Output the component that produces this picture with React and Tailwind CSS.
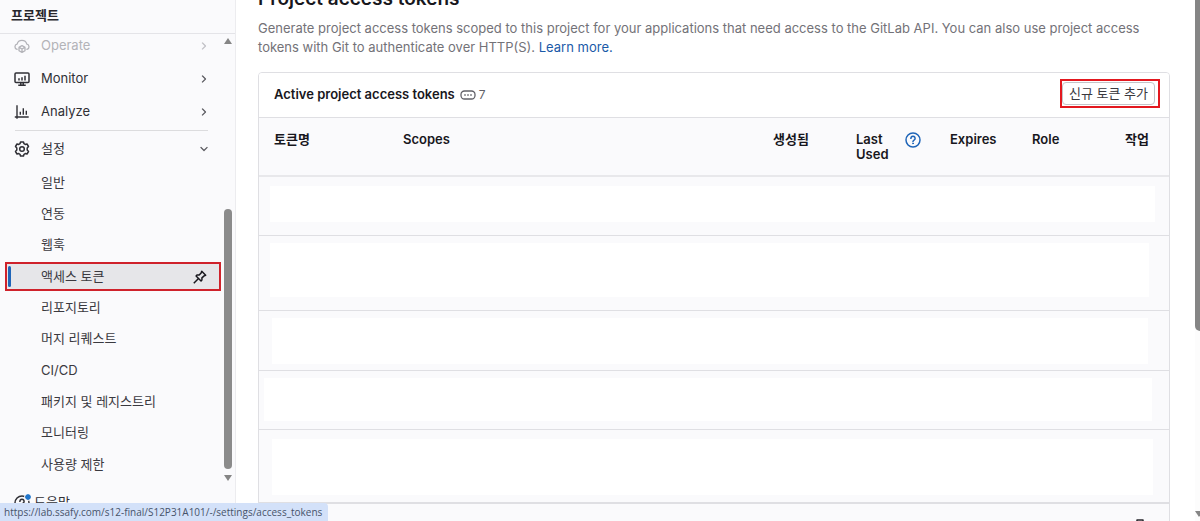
import React from 'react';

const line = { fill: 'none', stroke: 'currentColor', strokeWidth: 1.5, strokeLinecap: 'square', strokeLinejoin: 'round' };

const OperateIcon = () => (
  <svg viewBox="0 0 16 16" className="size-4 shrink-0" {...line} strokeWidth="1.3" aria-hidden="true">
    <path d="M3 11.3a2.6 2.6 0 0 1 .1-5.100A5 5 0 0 1 12.800 6.200a2.600 2.600 0 0 1 .2 5.100" />
    <path d="M8 7.600l3 1.600v3.500l-3 1.700-3-1.700V9.200z M5.200 9.400L8 11l2.800-1.600M8 11v3" />
  </svg>
);

const MonitorIcon = () => (
  <svg viewBox="0 0 16 16" className="size-4 shrink-0" {...line} aria-hidden="true">
    <rect x="1" y="2" width="14" height="9.500" rx="1" />
    <path d="M5 8v.7M8 7v1.700M11 5.500v3.200M5 14.300h6M6.800 12v2M9.200 12v2" />
  </svg>
);

const AnalyzeIcon = () => (
  <svg viewBox="0 0 16 16" className="size-4 shrink-0" {...line} strokeWidth="1.4" aria-hidden="true">
    <path d="M3 2v12M1.500 13h12.500M6.300 8.500v1.500M9.300 5v5M12.300 7.500v2.500" />
  </svg>
);

const SettingsIcon = () => (
  <svg viewBox="0 0 16 16" className="size-4 shrink-0" {...line} aria-hidden="true">
    <path d="M6.500 1h3l.5 1.700 1.200.7 1.800-.4 1.500 2.500L13.200 7v2l1.300 1.500-1.500 2.500-1.800-.4-1.200.7-.5 1.700h-3l-.5-1.700-1.200-.7-1.800.4-1.500-2.500L2.800 9V7L1.500 5.500 3 3l1.800.4L6 2.700z" />
    <circle cx="8" cy="8" r="2.300" />
  </svg>
);

const PinIcon = () => (
  <svg viewBox="0 0 16 16" className="size-[14px] shrink-0 text-[#18171d]" {...line} strokeWidth="1.7" aria-hidden="true">
    <path d="M10 1.500l4.500 4.500-1.800.7-2.500 2.300v2.500l-1 1-5.700-5.700 1-1h2.500l2.300-2.500zM6 10L1.500 14.500" />
  </svg>
);

const Chevron = ({ down }) => (
  <svg viewBox="0 0 12 12" className="size-3 shrink-0 opacity-80" {...line} strokeWidth="1.2" aria-hidden="true">
    <path d={down ? 'M3 4.500L6 7.500l3-3' : 'M4.500 3L7.500 6l-3 3'} />
  </svg>
);

const HelpIcon = () => (
  <svg viewBox="0 0 16 16" className="size-4 shrink-0" {...line} aria-hidden="true">
    <circle cx="8" cy="8" r="7" />
    <path d="M5.900 6.300a2.100 2.100 0 1 1 3.200 1.800C8.400 8.500 8 8.700 8 9.400" />
    <circle cx="8" cy="11.500" r=".5" fill="currentColor" strokeWidth=".8" />
  </svg>
);

const TokenIcon = () => (
  <svg viewBox="0 0 16 16" className="size-4 shrink-0" {...line} strokeWidth="1.3" aria-hidden="true">
    <rect x="1" y="4" width="14" height="8" rx="3.500" />
    <path d="M5 8h.01M8 8h.01M11 8h.01" strokeWidth="1.500" />
  </svg>
);

const TrashIcon = () => (
  <svg viewBox="0 0 16 16" className="size-4 shrink-0" {...line} aria-hidden="true">
    <path d="M5 3.500V1h6v2.500M1.500 3.500h13M3 4l.8 11h8.400L13 4" />
  </svg>
);

const Triangle = ({ up }) => (
  <svg viewBox="0 0 8 6" className="h-[6px] w-[8px] shrink-0 fill-[#858585]" aria-hidden="true">
    <path d={up ? 'M4 0l4 6H0z' : 'M0 0h8L4 6z'} />
  </svg>
);

const sections = [
  { name: 'Operate', Icon: OperateIcon, style: '-mt-[5px] text-[#b3b3b8]' },
  { name: 'Monitor', Icon: MonitorIcon, style: 'text-[#303036]' },
  { name: 'Analyze', Icon: AnalyzeIcon, style: 'text-[#303036]' },
];

const settings = ['일반', '연동', '웹훅', '액세스 토큰', '리포지토리', '머지 리퀘스트', 'CI/CD', '패키지 및 레지스트리', '모니터링', '사용량 제한'];

const rows = [
  { cell: 'h-[59px] border-b pt-[9px] pb-[13px] pl-[11px] pr-[14px]', block: 'h-[36px]' },
  { cell: 'h-[75px] border-b pt-[7px] pb-[13px] pl-[11px] pr-[20px]', block: 'h-[54px]' },
  { cell: 'h-[60px] border-b pt-[7px] pb-[6px] pl-[13px] pr-[21px]', block: 'h-[46px]' },
  { cell: 'h-[59px] border-b pt-[7px] pb-[8px] pl-[5px] pr-[17px]', block: 'h-[43px]' },
  { cell: 'h-[74px] border-b-2 pt-[9px] pb-[7px] pl-[13px] pr-[16px]', block: 'h-[56px]' },
];

function Sidebar() {
  return (
    <aside className="flex w-[236px] shrink-0 flex-col border-r border-[#ececef] bg-[#fafafc] text-[13px]">
      <h2 className="h-[34px] shrink-0 border-b border-[#e4e4e8] pl-[11px] text-[13px] leading-[31px] font-semibold text-[#28272d]">프로젝트</h2>
      <div className="flex min-h-0 flex-1">
        <nav aria-label="프로젝트" className="flex min-w-0 flex-1 flex-col overflow-hidden">
          {sections.map(({ name, Icon, style }) => (
            <button key={name} type="button" className={`flex h-[33px] shrink-0 items-center gap-[11px] pr-[11px] pl-[14px] text-left ${style}`}>
              <Icon />
              <span className="flex-1">{name}</span>
              <Chevron />
            </button>
          ))}
          <hr className="mr-[13px] ml-[15px] mt-[2px] border-[#dcdcde]" />
          <button type="button" aria-expanded="true" className="flex h-[35px] shrink-0 items-center gap-[11px] pr-[11px] pl-[14px] text-left text-[#303036]">
            <SettingsIcon />
            <span className="flex-1">설정</span>
            <Chevron down />
          </button>
          <ul className="mt-px grid max-h-[313px] flex-1 auto-rows-fr text-[#3a393f]">
            {settings.map((name) =>
              name === '액세스 토큰' ? (
                <li key={name} className="ml-[5px] flex items-center">
                  <a href="#access-tokens" aria-current="page" className="flex h-[29px] flex-1 items-center border-2 border-[#cf222b] bg-[#e6e6e9] pr-[12px] pl-[1px]">
                    <span className="mr-[30px] h-[21px] w-[3px] rounded-sm bg-[#1f65b8]" />
                    <span className="flex-1">{name}</span>
                    <PinIcon />
                  </a>
                </li>
              ) : (
                <li key={name} className="flex items-center">
                  <a href="#settings" className="flex-1 pl-[41px]">{name}</a>
                </li>
              )
            )}
          </ul>
        </nav>
        <div className="flex w-[14px] shrink-0 flex-col items-center pt-[4px] pb-[3px]">
          <Triangle up />
          <div className="flex w-[8px] flex-1 flex-col justify-end py-[6px]">
            <div className="h-[62%] rounded-full bg-[#8b8b8b]" />
          </div>
          <Triangle />
        </div>
      </div>
      <div className="flex h-[37px] shrink-0 items-center px-[14px]">
        <button type="button" className="flex items-center gap-1 text-[#303036]">
          <span className="relative flex">
            <HelpIcon />
            <span className="absolute -top-px -right-px size-[6px] rounded-full bg-[#1f75cb] outline outline-[#fafafc]" />
          </span>
          도움말
        </button>
      </div>
    </aside>
  );
}

function TokenTable() {
  return (
    <table className="w-full table-fixed border-separate border-spacing-0 text-left text-[13px] leading-[15px]">
      <colgroup>
        <col className="w-[129px]" />
        <col />
        <col className="w-[83px]" />
        <col className="w-[94px]" />
        <col className="w-[82px]" />
        <col className="w-[82px]" />
        <col className="w-[70px]" />
      </colgroup>
      <thead>
        <tr className="h-[59px] align-top text-[#18171d] [&>th]:border-b-2 [&>th]:border-[#e8e8eb] [&>th]:pt-[14px] [&>th]:pl-[15px] [&>th]:font-semibold">
          <th scope="col">토큰명</th>
          <th scope="col">Scopes</th>
          <th scope="col">생성됨</th>
          <th scope="col">
            <span className="flex items-start justify-between pr-[14px]">
              <span className="w-[36px]">Last Used</span>
              <button type="button" aria-label="Last Used help" className="text-[#1f65b8]"><HelpIcon /></button>
            </span>
          </th>
          <th scope="col">Expires</th>
          <th scope="col">Role</th>
          <th scope="col" className="pr-[20px] text-right">작업</th>
        </tr>
      </thead>
      <tbody>
        {rows.map(({ cell, block }, i) => (
          <tr key={i}>
            <td colSpan={7} className={`border-[#dfdfe3] ${cell}`}>
              <div className={`bg-white ${block}`} />
            </td>
          </tr>
        ))}
        <tr>
          <td colSpan={7} className="pt-[15px] pr-[21px] pb-4">
            <button type="button" aria-label="삭제" className="ml-auto flex text-[#28272d]"><TrashIcon /></button>
          </td>
        </tr>
      </tbody>
    </table>
  );
}

export default function App() {
  return (
    <div className="relative flex h-screen overflow-hidden bg-white font-['Inter','Noto_Sans_CJK_KR',sans-serif]">
      <Sidebar />
      <main className="min-w-0 flex-1 overflow-hidden pr-[25px] pl-[22px]">
        <h1 className="-mt-[13px] text-[19px] leading-[24px] font-semibold text-[#18171d]">Project access tokens</h1>
        <p className="mt-[8px] text-[13px] leading-[19px] text-[#737278]">
          Generate project access tokens scoped to this project for your applications that need access to the GitLab API. You can also use project access tokens with Git to authenticate over HTTP(S).{' '}
          <a href="#learn-more" className="text-[#1a5aa8]">Learn more.</a>
        </p>
        <section className="mt-[15px] overflow-hidden rounded-t border border-[#dfdfe3] bg-[#fafafc]">
          <header className="flex h-[45px] items-start justify-between border-b border-[#dfdfe3] bg-white pt-[6px] pr-[9px] pl-[15px]">
            <div className="flex h-[32px] items-center text-[13px]">
              <h2 className="font-semibold text-[#18171d]">Active project access tokens</h2>
              <span className="ml-[5px] flex items-center gap-[3px] text-[#626168]"><TokenIcon /><span className="text-[12px]">7</span></span>
            </div>
            <div className="border-2 border-[#e3181f] py-[1px] pr-[3px]">
              <button type="button" className="block h-[23px] rounded border border-[#c4c4c8] px-[6px] text-[13px] leading-[21px] text-[#3a393f]">신규 토큰 추가</button>
            </div>
          </header>
          <TokenTable />
        </section>
      </main>
      <div className="flex w-[5px] shrink-0 flex-col justify-between overflow-hidden bg-[#fcfcfc] pb-[4px]">
        <div className="h-[64%] w-[10px] rounded-b-full bg-[#858585]" />
        <Triangle />
      </div>
      <div className="absolute bottom-0 left-0 h-[18px] rounded-tr-sm bg-[#d3e1f9] pr-[6px] pl-[4px] font-['Open_Sans','Noto_Sans',sans-serif] text-[10px] leading-[18px] text-[#47536a]">
        https://lab.ssafy.com/s12-final/S12P31A101/-/settings/access_tokens
      </div>
    </div>
  );
}
